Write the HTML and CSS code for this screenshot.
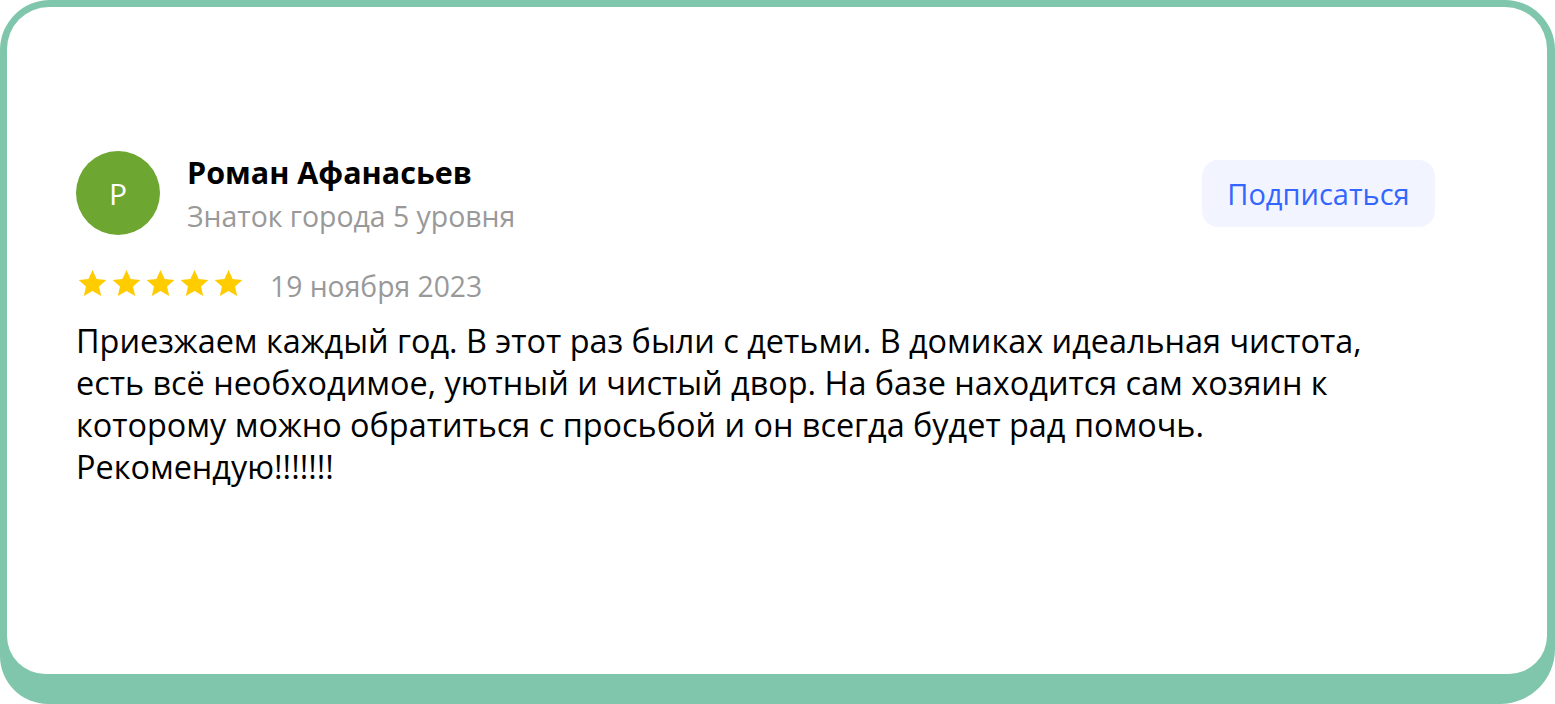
FILE: index.html
```html
<!DOCTYPE html>
<html lang="ru">
<head>
<meta charset="utf-8">
<link rel="stylesheet" href="styles.css">
</head>
<body>
<div class="frame">
  <div class="card">
    <div class="header">
      <div class="avatar">Р</div>
      <div class="who">
        <div class="name">Роман Афанасьев</div>
        <div class="level">Знаток города 5 уровня</div>
      </div>
      <button class="subscribe">Подписаться</button>
    </div>
    <div class="meta">
      <div class="stars">
        <svg viewBox="0 0 24 24" class="star"><path d="M12 .8l3.4 7.4 8.1.8-6.1 5.4 1.8 8L12 18.3l-7.2 4.1 1.8-8L.5 9l8.1-.8z"/></svg>
        <svg viewBox="0 0 24 24" class="star"><path d="M12 .8l3.4 7.4 8.1.8-6.1 5.4 1.8 8L12 18.3l-7.2 4.1 1.8-8L.5 9l8.1-.8z"/></svg>
        <svg viewBox="0 0 24 24" class="star"><path d="M12 .8l3.4 7.4 8.1.8-6.1 5.4 1.8 8L12 18.3l-7.2 4.1 1.8-8L.5 9l8.1-.8z"/></svg>
        <svg viewBox="0 0 24 24" class="star"><path d="M12 .8l3.4 7.4 8.1.8-6.1 5.4 1.8 8L12 18.3l-7.2 4.1 1.8-8L.5 9l8.1-.8z"/></svg>
        <svg viewBox="0 0 24 24" class="star"><path d="M12 .8l3.4 7.4 8.1.8-6.1 5.4 1.8 8L12 18.3l-7.2 4.1 1.8-8L.5 9l8.1-.8z"/></svg>
      </div>
      <span class="date">19 ноября 2023</span>
    </div>
    <p class="text">Приезжаем каждый год. В этот раз были с детьми. В домиках идеальная чистота,<br>есть всё необходимое, уютный и чистый двор. На базе находится сам хозяин к<br>которому можно обратиться с просьбой и он всегда будет рад помочь.<br>Рекомендую!!!!!!!</p>
  </div>
</div>
</body>
</html>
```

FILE: styles.css
```css
html, body {
  margin: 0;
  padding: 0;
  background: #ffffff;
}
body {
  width: 1555px;
  height: 704px;
  font-family: "Open Sans", "Noto Sans", sans-serif;
}
.frame {
  box-sizing: border-box;
  width: 1555px;
  height: 704px;
  background: #7fc6ac;
  border-radius: 50px 50px 55px 48px;
  padding: 7px 8px 30px 7px;
  display: flex;
}
.card {
  flex: 1;
  background: #ffffff;
  border-radius: 42px 42px 38px 38px;
  padding: 144px 112px 0 69px;
  display: flex;
  flex-direction: column;
}
.header {
  display: flex;
  align-items: flex-start;
}
.avatar {
  width: 84px;
  height: 84px;
  border-radius: 50%;
  background: #6ea632;
  color: #fff;
  font-size: 30px;
  display: flex;
  align-items: center;
  justify-content: center;
  flex-shrink: 0;
}
.who {
  margin-left: 27px;
  flex: 1;
}
.name {
  font-weight: 700;
  font-size: 30.5px;
  line-height: 42px;
  color: #000;
}
.level {
  margin-top: 3px;
  font-size: 28.4px;
  line-height: 40px;
  color: #999999;
}
.subscribe {
  margin-top: 9px;
  width: 233px;
  height: 67px;
  border: none;
  border-radius: 16px;
  background: #f2f5ff;
  color: #3366ff;
  font-family: inherit;
  font-size: 29px;
  padding: 0;
}
.meta {
  display: flex;
  align-items: flex-start;
  margin-top: 33px;
}
.stars {
  display: flex;
  gap: 5px;
  margin-left: 2px;
}
.star {
  width: 29px;
  height: 29px;
  fill: #ffcc00;
}
.date {
  margin-left: 27px;
  font-size: 28.3px;
  line-height: 34px;
  color: #999999;
}
.text {
  margin: 16px 0 0 0;
  font-size: 32.4px;
  line-height: 42px;
  color: #000;
}
```
